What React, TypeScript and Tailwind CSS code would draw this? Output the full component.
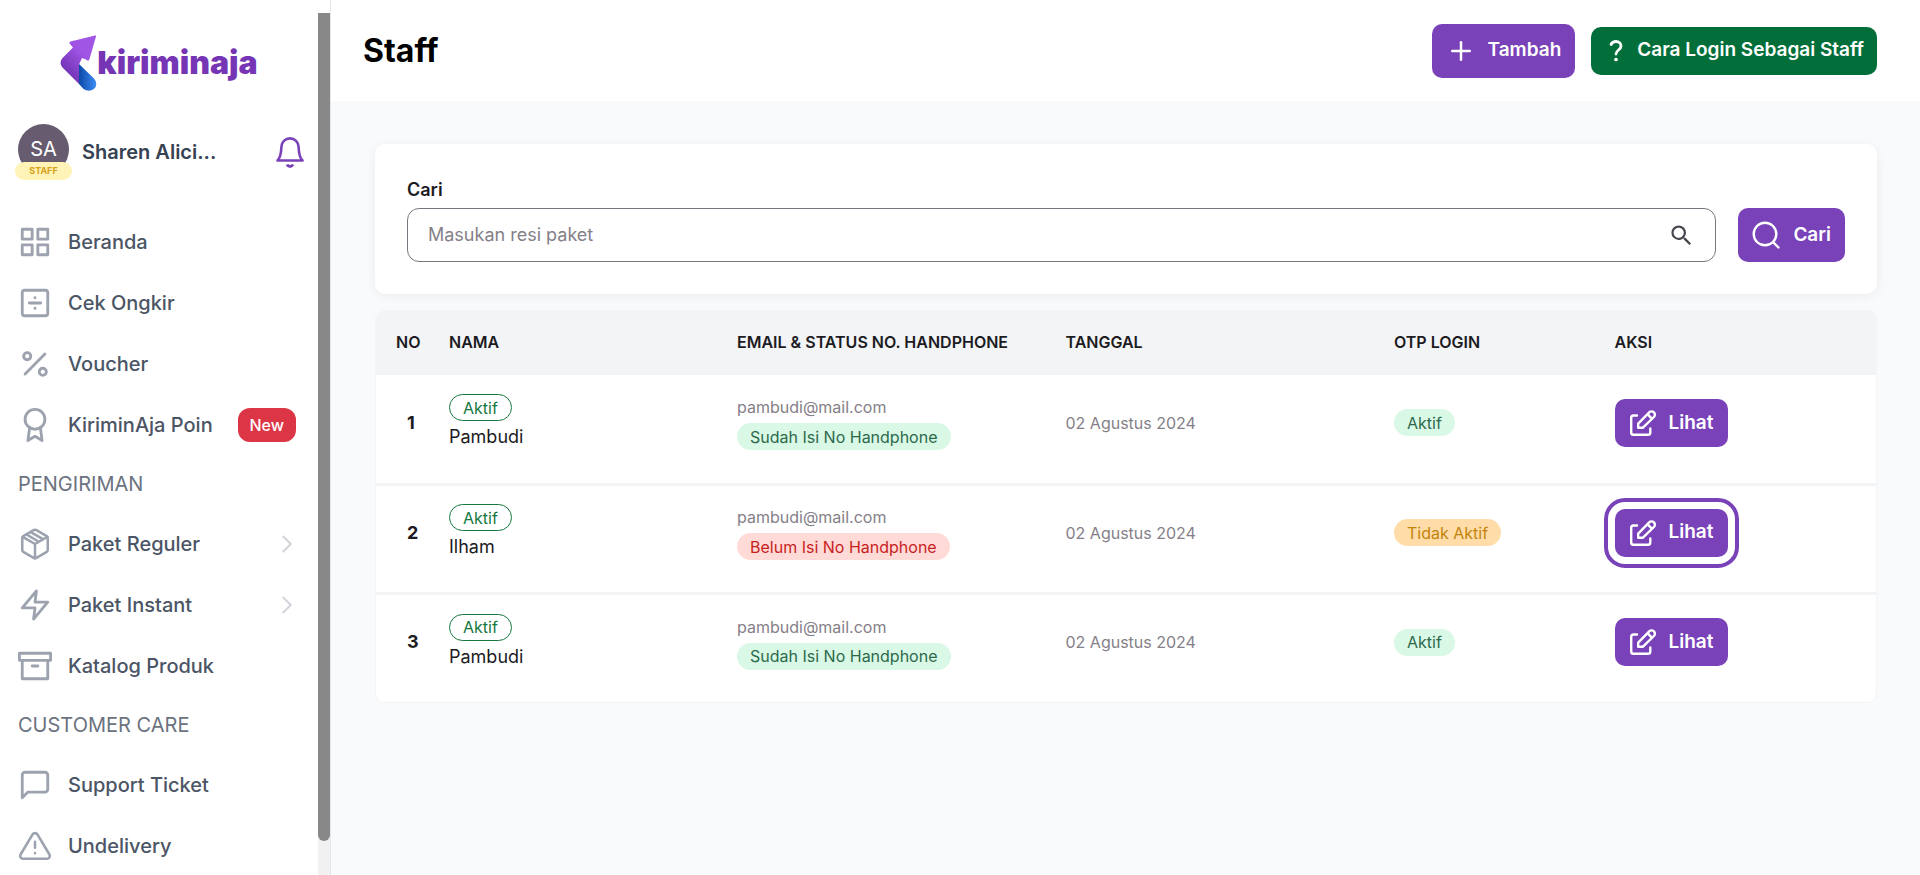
import { FiArchive, FiAward, FiChevronRight, FiGrid, FiMessageSquare, FiPercent, FiPlus, FiZap } from "react-icons/fi";
import { MdSearch } from "react-icons/md";
import type { ReactNode } from "react";

type MenuItem = {
  label: string;
  icon: ReactNode;
  badge?: string;
  expandable?: boolean;
};

type Staff = {
  no: number;
  name: string;
  email: string;
  hasPhone: boolean;
  date: string;
  otp: boolean;
  focused?: boolean;
};

const CalcIcon = () => (
  <svg viewBox="0 0 24 24" className="size-[34px]" fill="none" stroke="currentColor" strokeWidth="2" strokeLinecap="round" strokeLinejoin="round">
    <rect x="3" y="3" width="18" height="18" rx="1.8" />
    <path d="M8 12h8M12 8.200v.1M12 15.700v.1" />
  </svg>
);

const BoxIcon = () => (
  <svg viewBox="0 0 24 24" className="size-[34px]" fill="none" stroke="currentColor" strokeWidth="1.8" strokeLinecap="round" strokeLinejoin="round">
    <path d="M21 16V8a2 2 0 0 0-1-1.730l-7-4a2 2 0 0 0-2 0l-7 4A2 2 0 0 0 3 8v8a2 2 0 0 0 1 1.730l7 4a2 2 0 0 0 2 0l7-4A2 2 0 0 0 21 16z" />
    <path d="M3.300 7 12 12l8.700-5M12 22V12M6.200 5.400l8.600 5M9 3.600l8.600 5" />
  </svg>
);

const WarningIcon = () => (
  <svg viewBox="0 0 24 24" className="size-[34px]" fill="none" stroke="currentColor" strokeWidth="1.8" strokeLinecap="round" strokeLinejoin="round">
    <path d="M10.290 3.860 1.820 18a2 2 0 0 0 1.710 3h16.940a2 2 0 0 0 1.710-3L13.710 3.860a2 2 0 0 0-3.420 0z" />
    <path d="M12 9v4.200M12 17v.1" />
  </svg>
);

const BellIcon = () => (
  <svg viewBox="0 0 28 32" className="h-8 w-7" fill="none" stroke="currentColor" strokeWidth="2.6" strokeLinejoin="round">
    <path d="M1.500 24.500C4.500 21.500 5.200 17 5.400 11a8.600 8.600 0 0 1 17.200 0c.2 6 .9 10.500 3.900 13.500z" />
    <path d="M11 28.500a3.300 3.300 0 0 0 6 0" strokeWidth="3" />
  </svg>
);

const EditIcon = () => (
  <svg viewBox="0 0 26 26" className="size-[26px]" fill="none" stroke="currentColor" strokeWidth="2.4" strokeLinecap="round" strokeLinejoin="round">
    <path d="M7 5.500H3.500A2.300 2.300 0 0 0 1.200 7.800V22.500a2.300 2.300 0 0 0 2.300 2.300H18a2.300 2.300 0 0 0 2.300-2.300V18.500" />
    <path d="M8.200 17.800V13.600L19.200 2.300a3.300 3.300 0 0 1 4.700 4.700L12.700 17.800zM17.500 4.200l4.300 4.500" />
  </svg>
);

const SearchIcon = () => (
  <svg viewBox="0 0 28 28" className="size-7" fill="none" stroke="currentColor" strokeWidth="2.4" strokeLinecap="round">
    <circle cx="13" cy="13" r="11.300" />
    <path d="m21.300 21.300 5.200 5.200" />
  </svg>
);

const QuestionIcon = () => (
  <svg viewBox="0 0 14 22" className="h-[22px] w-[14px]" fill="none" stroke="currentColor" strokeWidth="2.800" strokeLinecap="round" strokeLinejoin="round">
    <path d="M2 4.500C3 2.500 5 1.500 7 1.500c3 0 5 2 5 4.500 0 4-5 4-5 8" />
    <circle cx="7" cy="19.500" r="1.100" fill="currentColor" strokeWidth="1.500" />
  </svg>
);

const Logo = () => (
  <div className="flex h-[58px] items-center justify-center">
    <svg viewBox="0 0 37 57" className="h-[57px] w-[37px]" aria-hidden="true">
      <defs>
        <linearGradient id="arrow" x1="1" y1="0" x2="0.3" y2="1">
          <stop offset="0.4" stopColor="#a155e5" />
          <stop offset="1" stopColor="#6b2fae" />
        </linearGradient>
        <linearGradient id="tail" x1="0" y1="0" x2="1" y2="0">
          <stop offset="0" stopColor="#0b4aa8" />
          <stop offset="1" stopColor="#3d8cf4" />
        </linearGradient>
      </defs>
      <path d="M35 0.500 10.500 6.500Q8.500 7.500 10 9L13 12.500 2.500 23Q-1.500 27.500 2.500 32.500L19 49V29.500L22 23 26 24.500Q28.500 27 29.500 24L36 1.500Q36.300 0.200 35 0.500Z" fill="url(#arrow)" />
      <path d="M19 29 34 43.500Q38 48 35 53Q30 58 23.500 54L19 49Z" fill="url(#tail)" />
    </svg>
    <span className="text-[32px] leading-10 font-black text-[#7635b5]">kiriminaja</span>
  </div>
);

const mainMenu: MenuItem[] = [
  { label: "Beranda", icon: <FiGrid size={34} strokeWidth={2} /> },
  { label: "Cek Ongkir", icon: <CalcIcon /> },
  { label: "Voucher", icon: <FiPercent size={34} strokeWidth={2} /> },
  { label: "KiriminAja Poin", icon: <FiAward size={34} strokeWidth={2} />, badge: "New" },
];

const shippingMenu: MenuItem[] = [
  { label: "Paket Reguler", icon: <BoxIcon />, expandable: true },
  { label: "Paket Instant", icon: <FiZap size={34} strokeWidth={2} />, expandable: true },
  { label: "Katalog Produk", icon: <FiArchive size={34} strokeWidth={2} /> },
];

const careMenu: MenuItem[] = [
  { label: "Support Ticket", icon: <FiMessageSquare size={34} strokeWidth={2} /> },
  { label: "Undelivery", icon: <WarningIcon /> },
];

const staffList: Staff[] = [
  { no: 1, name: "Pambudi", email: "pambudi@mail.com", hasPhone: true, date: "02 Agustus 2024", otp: true },
  { no: 2, name: "Ilham", email: "pambudi@mail.com", hasPhone: false, date: "02 Agustus 2024", otp: false, focused: true },
  { no: 3, name: "Pambudi", email: "pambudi@mail.com", hasPhone: true, date: "02 Agustus 2024", otp: true },
];

function Menu({ items }: { items: MenuItem[] }) {
  return (
    <ul>
      {items.map((item) => (
        <li key={item.label}>
          <a href="#" className="flex h-[61px] items-center pr-[22px] pl-[17px] text-xl font-medium text-[#4b5565]">
            <span className="mr-4 flex w-[35px] justify-center text-[#9ca3af]">{item.icon}</span>
            {item.label}
            {item.badge && (
              <span className="ml-auto rounded-xl bg-[#dc3545] px-3 py-1 text-base leading-[26px] text-white">
                {item.badge}
              </span>
            )}
            {item.expandable && <FiChevronRight size={30} strokeWidth={1.6} className="-mr-1.5 ml-auto text-[#d1d5db]" />}
          </a>
        </li>
      ))}
    </ul>
  );
}

function Pill({ className, children }: { className: string; children: ReactNode }) {
  return (
    <span className={`inline-flex h-[27px] items-center rounded-full px-[13px] text-base ${className}`}>
      {children}
    </span>
  );
}

export default function App() {
  return (
    <div className="flex h-screen bg-[#f9fafc] font-['Inter',sans-serif] text-[#1c1b1f]">
      {/* SIDEBAR */}
      <aside className="flex w-[331px] shrink-0 overflow-hidden border-r border-gray-200 bg-white">
        <div className="min-w-0 flex-1 pt-[34px]">
          <Logo />

          <div className="flex h-[119px] items-center pr-[14px] pl-[15px]">
            <div className="relative w-[57px] shrink-0 pb-[5px]">
              <div className="mx-auto flex size-[51px] items-center justify-center rounded-full bg-[#675b70] text-xl text-white">
                SA
              </div>
              <span className="absolute bottom-0 left-0 w-full rounded-full bg-[#fff3b8] text-center text-[9px] leading-[18px] font-bold text-[#d6a016]">
                STAFF
              </span>
            </div>
            <p className="ml-[10px] text-xl font-semibold text-[#364152]">Sharen Alici...</p>
            <button type="button" aria-label="Notifikasi" className="ml-auto text-[#7a42b8]">
              <BellIcon />
            </button>
          </div>

          <nav>
            <Menu items={mainMenu} />
            <h2 className="pl-[18px] text-xl leading-[58px] text-[#6b7280]">PENGIRIMAN</h2>
            <Menu items={shippingMenu} />
            <h2 className="pl-[18px] text-xl leading-[58px] text-[#6b7280]">CUSTOMER CARE</h2>
            <Menu items={careMenu} />
          </nav>
        </div>

        {/* SCROLLBAR */}
        <div className="w-3 pt-[13px]">
          <div className="h-full bg-[#f1f1f1]">
            <div className="h-[96%] rounded-b-full bg-[#888]" />
          </div>
        </div>
      </aside>

      <div className="min-w-0 flex-1">
        {/* HEADER */}
        <header className="flex h-[101px] items-center justify-between bg-white pr-[43px] pl-8">
          <h1 className="text-[32px] font-bold text-black">Staff</h1>
          <div className="flex items-center gap-4 text-[19px] font-semibold text-white">
            <button type="button" className="flex h-[54px] items-center gap-3 rounded-[10px] bg-[#7a42b8] px-[14px]">
              <FiPlus size={30} />
              Tambah
            </button>
            <button type="button" className="flex h-12 items-center gap-[14px] rounded-[10px] bg-[#026f3a] pr-[13px] pl-[18px]">
              <QuestionIcon />
              Cara Login Sebagai Staff
            </button>
          </div>
        </header>

        <main className="space-y-4 pt-[43px] pr-[43px] pl-11">
          {/* SEARCH */}
          <form
            onSubmit={(e) => e.preventDefault()}
            className="flex items-end gap-[22px] rounded-[10px] bg-white p-8 shadow-[0_2px_12px_rgba(0,0,0,0.06)]"
          >
            <div className="flex-1">
              <label htmlFor="cari" className="block pb-1 text-lg leading-7 font-semibold">
                Cari
              </label>
              <div className="flex h-[54px] items-center rounded-xl border border-[#7b757f] px-5">
                <input
                  id="cari"
                  type="text"
                  placeholder="Masukan resi paket"
                  className="min-w-0 flex-1 text-lg outline-none placeholder:text-[#857f89]"
                />
                <MdSearch size={27} className="text-[#49454f]" />
              </div>
            </div>
            <button type="submit" className="flex h-[54px] items-center gap-[13px] rounded-[10px] bg-[#7a42b8] px-[14px] text-[19px] font-semibold text-white">
              <SearchIcon />
              Cari
            </button>
          </form>

          {/* TABLE */}
          <div className="overflow-hidden rounded-[10px] border border-[#f3f4f6] bg-white">
            <table className="w-full table-fixed text-left">
              <thead className="h-16 bg-[#f3f4f6] text-base">
                <tr>
                  <th className="w-[73px] pb-0.5 pl-5 font-semibold">NO</th>
                  <th className="w-[19.2%] pb-0.5 font-semibold">NAMA</th>
                  <th className="w-[21.9%] pb-0.5 font-semibold">EMAIL &amp; STATUS NO. HANDPHONE</th>
                  <th className="w-[21.9%] pb-0.5 font-semibold">TANGGAL</th>
                  <th className="w-[14.7%] pb-0.5 font-semibold">OTP LOGIN</th>
                  <th className="pb-0.5 font-semibold">AKSI</th>
                </tr>
              </thead>
              <tbody className="divide-y-3 divide-[#f3f4f6]">
                {staffList.map((staff) => (
                  <tr key={staff.no} className="h-[109px]">
                    <td className="pb-3 pl-[31px] text-lg font-bold">{staff.no}</td>
                    <td className="pb-3">
                      <div className="flex flex-col items-start gap-0.5">
                        <Pill className="border border-[#14783e] text-[#14783e]">Aktif</Pill>
                        <p className="text-lg leading-7">{staff.name}</p>
                      </div>
                    </td>
                    <td className="pb-3">
                      <div className="flex flex-col items-start gap-1">
                        <p className="text-base text-[#857f89]">{staff.email}</p>
                        {staff.hasPhone ? (
                          <Pill className="bg-[#d9f8e6] text-[#2d6a4c]">Sudah Isi No Handphone</Pill>
                        ) : (
                          <Pill className="bg-[#ffdad7] text-[#c81e1e]">Belum Isi No Handphone</Pill>
                        )}
                      </div>
                    </td>
                    <td className="pb-3 text-base text-[#857f89]">{staff.date}</td>
                    <td className="pb-3">
                      {staff.otp ? (
                        <Pill className="bg-[#d9f8e6] text-[#2d6a4c]">Aktif</Pill>
                      ) : (
                        <Pill className="bg-[#ffdca8] text-[#c2850c]">Tidak Aktif</Pill>
                      )}
                    </td>
                    <td className="pb-3">
                      <button
                        type="button"
                        className={`flex h-12 items-center gap-[13px] rounded-[10px] bg-[#7a42b8] px-[15px] text-[19px] font-semibold text-white ${
                          staff.focused ? "outline-4 outline-offset-[7px] outline-[#7a42b8]" : ""
                        }`}
                      >
                        <EditIcon />
                        Lihat
                      </button>
                    </td>
                  </tr>
                ))}
              </tbody>
            </table>
          </div>
        </main>
      </div>
    </div>
  );
}
